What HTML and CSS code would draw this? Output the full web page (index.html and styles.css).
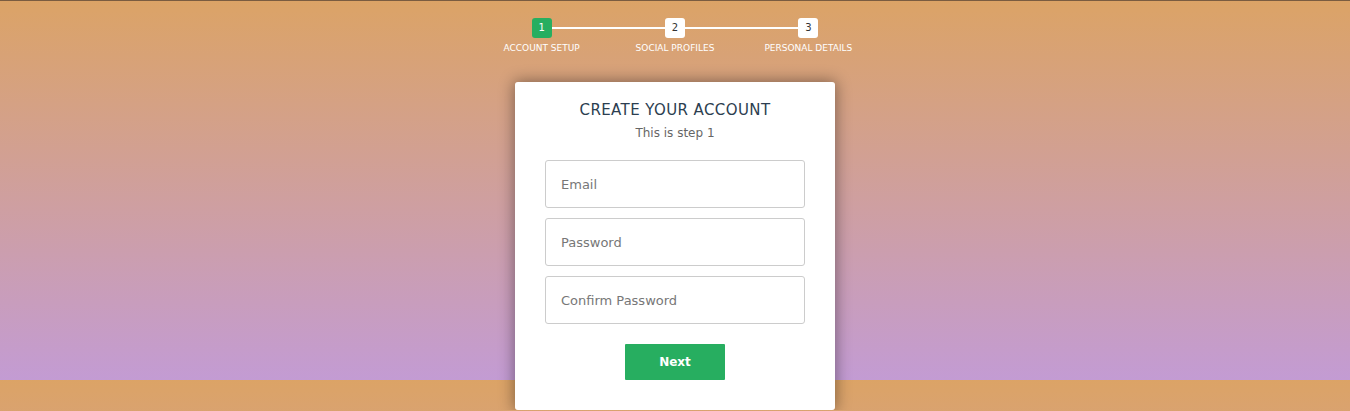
FILE: index.html
```html
<!DOCTYPE html>
<html lang="en">
<head>
<meta charset="utf-8">
<title>Create your account</title>
<link rel="stylesheet" href="styles.css">
</head>
<body>
<div class="topline"></div>
<form class="msform">
  <ol class="progressbar">
    <li class="step active"><span class="num">1</span><span class="label">Account Setup</span></li>
    <li class="step"><span class="num">2</span><span class="label">Social Profiles</span></li>
    <li class="step"><span class="num">3</span><span class="label">Personal Details</span></li>
  </ol>
  <fieldset class="card">
    <h2 class="title">Create your account</h2>
    <h3 class="subtitle">This is step 1</h3>
    <input class="field" type="text" placeholder="Email">
    <input class="field" type="password" placeholder="Password">
    <input class="field" type="password" placeholder="Confirm Password">
    <button class="next" type="button">Next</button>
  </fieldset>
</form>
</body>
</html>
```
FILE: styles.css
```css
html {
  height: 100%;
  background-color: #fff;
  background-image: linear-gradient(rgba(196, 102, 0, 0.6), rgba(155, 89, 182, 0.6));
  background-size: 100% 380px;
  background-repeat: repeat-y;
}
body {
  margin: 0;
  font-family: "DejaVu Sans", sans-serif;
  overflow: hidden;
}
.topline {
  height: 1px;
  background: #7a5c40;
}
.msform {
  width: 400px;
  margin: 17px auto 0;
  text-align: center;
}
.progressbar {
  display: flex;
  list-style: none;
  margin: 0 0 28px;
  padding: 0;
}
.step {
  flex: 1;
  position: relative;
  display: flex;
  flex-direction: column;
  align-items: center;
  color: #fff;
  text-transform: uppercase;
  font-size: 9px;
  line-height: 12px;
}
.step + .step::after {
  content: "";
  position: absolute;
  left: -50%;
  top: 9px;
  width: 100%;
  height: 2px;
  background: #fff;
  z-index: 0;
}
.num {
  position: relative;
  z-index: 1;
  width: 20px;
  height: 20px;
  line-height: 20px;
  font-size: 10px;
  color: #333;
  background: #fff;
  border-radius: 3px;
  margin-bottom: 4px;
}
.step.active .num {
  background: #27ae60;
  color: #fff;
}
.card {
  background: #fff;
  border: 0;
  border-radius: 3px;
  box-shadow: 0 0 15px 1px rgba(0, 0, 0, 0.4);
  padding: 20px 30px;
  box-sizing: border-box;
  width: 320px;
  margin: 0 auto;
  display: flex;
  flex-direction: column;
  align-items: center;
}
.title {
  margin: 0 0 6px;
  font-size: 15px;
  letter-spacing: 0.4px;
  font-weight: normal;
  text-transform: uppercase;
  color: #2c3e50;
  line-height: 17px;
}
.subtitle {
  margin: 0 0 19px;
  font-size: 12px;
  font-weight: normal;
  color: #666;
  line-height: 16px;
}
.field {
  box-sizing: border-box;
  width: 260px;
  height: 48px;
  padding: 15px;
  border: 1px solid #ccc;
  border-radius: 3px;
  margin: 0 0 10px;
  font-family: inherit;
  font-size: 13px;
  color: #2c3e50;
  outline: none;
}
.field::placeholder {
  color: #777;
}
.next {
  width: 100px;
  height: 36px;
  margin: 10px 0 10px;
  background: #27ae60;
  color: #fff;
  border: 0;
  border-radius: 1px;
  font-family: inherit;
  font-weight: bold;
  font-size: 12px;
  cursor: pointer;
}
```
